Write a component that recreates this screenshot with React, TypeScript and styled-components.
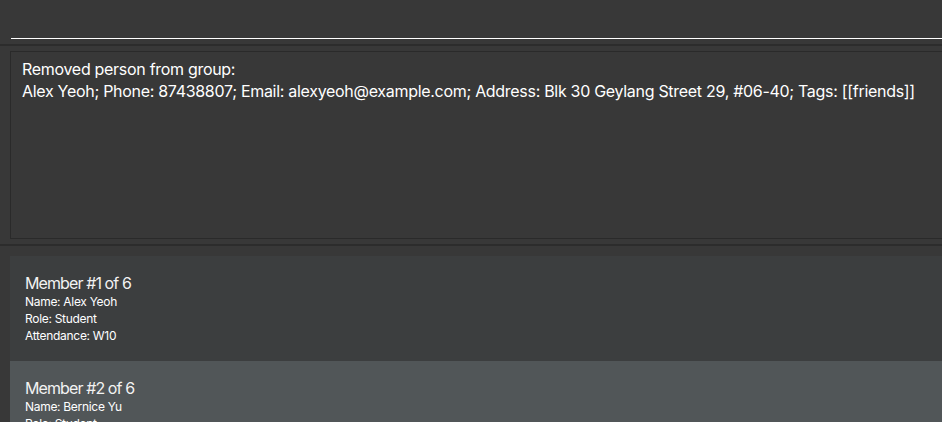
import React from "react";
import styled, { createGlobalStyle } from "styled-components";

const Global = createGlobalStyle`
  html, body { margin: 0; padding: 0; background: #383838; overflow: hidden; }
  body { font-family: Inter, "Open Sans", sans-serif; color: #ffffff; }
`;

const Page = styled.div`
  width: 942px;
  height: 422px;
  overflow: hidden;
  display: flex;
  flex-direction: column;
  background: #383838;
`;

const CommandBar = styled.div`
  height: 44px;
  flex: none;
  box-sizing: border-box;
  padding: 0 0 0 11px;
  display: flex;
  align-items: flex-start;
`;

const CommandInput = styled.div`
  flex: 1;
  height: 39px;
  box-sizing: border-box;
  border-bottom: 1px solid #ffffff;
`;

const Divider = styled.div`
  height: 2px;
  background: #2c2c2c;
  flex: none;
`;

const ResultPane = styled.div`
  height: 198px;
  flex: none;
  box-sizing: border-box;
  padding: 5px 0 5px 10px;
  display: flex;
`;

const ResultBox = styled.div`
  flex: 1;
  box-sizing: border-box;
  border: 1px solid #2a2a2a;
  border-right: none;
  padding: 6px 0 0 11px;
  font-size: 16px;
  line-height: 22px;
  color: #ffffff;
  white-space: pre;
  letter-spacing: -0.3px;
`;

const ListPane = styled.div`
  flex: 1;
  padding: 10px 0 0 10px;
  display: flex;
  flex-direction: column;
`;

const Card = styled.div<{ $alt?: boolean }>`
  height: 105px;
  flex: none;
  box-sizing: border-box;
  background: ${(p) => (p.$alt ? "#515658" : "#3c3e3f")};
  padding: 17px 0 0 15px;
  display: flex;
  flex-direction: column;
`;

const CardTitle = styled.div`
  font-size: 16px;
  line-height: 20px;
  color: #f2f2f2;
  letter-spacing: -0.9px;
`;

const CardLine = styled.div`
  font-size: 12px;
  line-height: 17px;
  color: #ffffff;
  letter-spacing: -0.3px;
`;

const members = [
  { name: "Alex Yeoh", role: "Student", attendance: "W10" },
  { name: "Bernice Yu", role: "Student", attendance: "W10" },
];

export default function App() {
  return (
    <Page>
      <Global />
      <CommandBar>
        <CommandInput />
      </CommandBar>
      <Divider />
      <ResultPane>
        <ResultBox>
          {"Removed person from group:\nAlex Yeoh; Phone: 87438807; Email: alexyeoh@example.com; Address: Blk 30 Geylang Street 29, #06-40; Tags: [[friends]]"}
        </ResultBox>
      </ResultPane>
      <Divider />
      <ListPane>
        {members.map((m, i) => (
          <Card key={i} $alt={i % 2 === 1}>
            <CardTitle>{`Member #${i + 1} of 6`}</CardTitle>
            <CardLine>{`Name: ${m.name}`}</CardLine>
            <CardLine>{`Role: ${m.role}`}</CardLine>
            <CardLine>{`Attendance: ${m.attendance}`}</CardLine>
          </Card>
        ))}
      </ListPane>
    </Page>
  );
}
